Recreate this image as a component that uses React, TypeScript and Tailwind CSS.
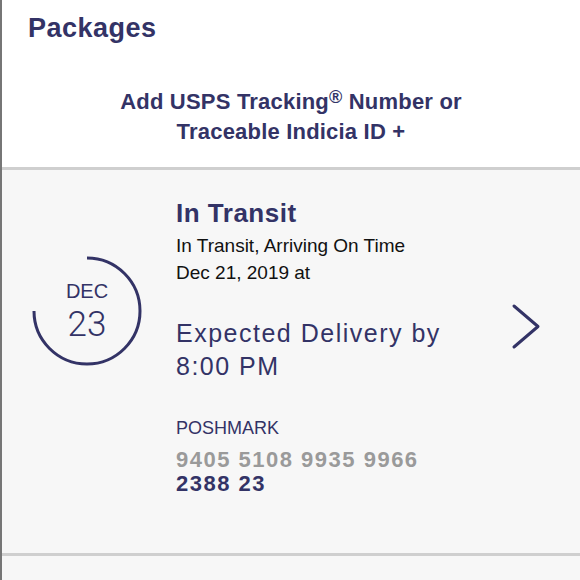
import { ReactNode } from "react";

const NAVY = "text-[#333366]";

function DateBadge({ month, day }: { month: string; day: string }) {
    return (
        <div className="relative h-[110px] w-[110px]">
            <svg viewBox="0 0 110 110" className="absolute inset-0 h-full w-full">
                <path
                    d="M 55 2 A 53 53 0 1 1 2 55"
                    fill="none"
                    stroke="#333366"
                    strokeWidth={3}
                />
            </svg>
            <div className={`relative flex flex-col items-center pt-[25px] ${NAVY}`}>
                <span className="text-[20px] leading-[20px]">{month}</span>
                <span className="mt-[6px] font-[family-name:Roboto,sans-serif] text-[35px] font-light leading-[35px]">
                    {day}
                </span>
            </div>
        </div>
    );
}

function Chevron() {
    return (
        <svg width="30" height="47" viewBox="0 0 30 47" fill="none">
            <polyline
                points="3,3 27,23.5 3,44"
                stroke="#333366"
                strokeWidth={3}
                strokeLinecap="round"
                strokeLinejoin="round"
            />
        </svg>
    );
}

function Line({ className, children }: { className: string; children: ReactNode }) {
    return <div className={className}>{children}</div>;
}

export default function App() {
    return (
        <div className="h-[580px] w-[580px] overflow-hidden border-l-2 border-[#767676] bg-[#f7f7f7] font-[family-name:'Liberation_Sans',Arial,sans-serif]">
            {/* Header */}
            <div className="bg-white pb-[20px] pt-3">
                <h1 className={`pl-[26px] text-[27px] font-bold leading-[32px] tracking-[0.5px] ${NAVY}`}>
                    Packages
                </h1>
                <p className={`mt-[43px] text-center text-[22px] font-bold leading-[30px] tracking-[0.2px] ${NAVY}`}>
                    Add USPS Tracking
                    <sup className="-top-[6px] text-[18px]">®</sup> Number or
                    <br />
                    Traceable Indicia ID +
                </p>
            </div>
            <div className="h-[3px] bg-[#cfcfcf]" />

            {/* Package card */}
            <div className="flex items-start bg-[#f7f7f7] pb-[57px]">
                <div className="w-[174px] shrink-0 pl-[30px] pt-[86px]">
                    <DateBadge month="DEC" day="23" />
                </div>

                <div className="flex-1 pt-[28px]">
                    <Line className={`text-[26px] font-bold leading-[30px] tracking-[0.5px] ${NAVY}`}>
                        In Transit
                    </Line>
                    <div className="mt-1 text-[19px] leading-[27px] text-[#111111]">
                        <div>In Transit, Arriving On Time</div>
                        <div>Dec 21, 2019 at</div>
                    </div>
                    <div className={`mt-[31px] text-[25px] leading-[33px] tracking-[1.5px] ${NAVY}`}>
                        <div>Expected Delivery by</div>
                        <div>8:00 PM</div>
                    </div>
                    <Line className={`mt-[33px] text-[18px] leading-[24px] ${NAVY}`}>POSHMARK</Line>
                    <div className="mt-[8px] text-[22px] font-bold leading-[24px] tracking-[1.5px]">
                        <div className="text-[#9a9a9a]">9405 5108 9935 9966</div>
                        <div className={NAVY}>2388 23</div>
                    </div>
                </div>

                <div className="shrink-0 pr-[39px] pt-[133px]">
                    <Chevron />
                </div>
            </div>
            <div className="h-[3px] bg-[#cfcfcf]" />
        </div>
    );
}
